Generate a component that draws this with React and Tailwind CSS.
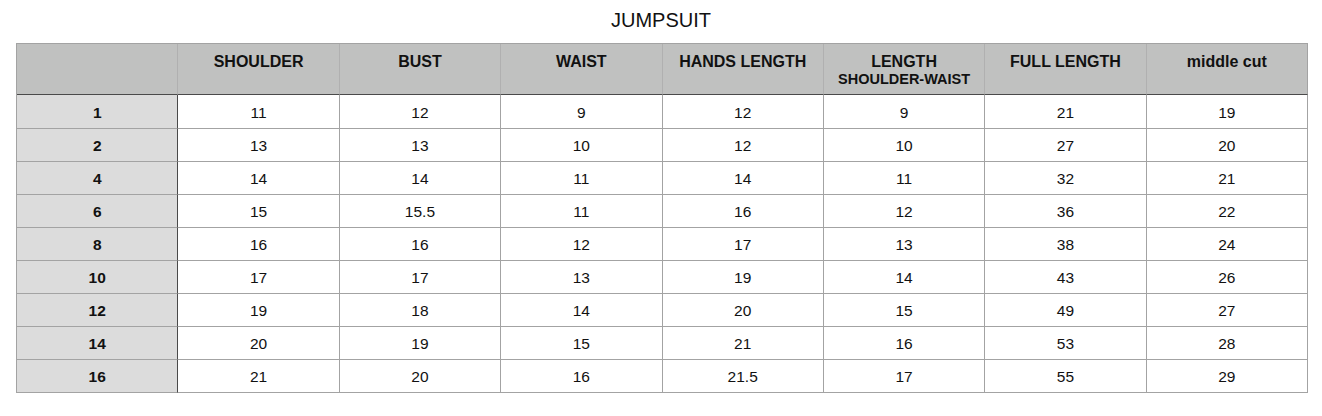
const headers = [
  ['SHOULDER'],
  ['BUST'],
  ['WAIST'],
  ['HANDS LENGTH'],
  ['LENGTH', 'SHOULDER-WAIST'],
  ['FULL LENGTH'],
  ['middle cut'],
]

const rows = [
  ['1', '11', '12', '9', '12', '9', '21', '19'],
  ['2', '13', '13', '10', '12', '10', '27', '20'],
  ['4', '14', '14', '11', '14', '11', '32', '21'],
  ['6', '15', '15.5', '11', '16', '12', '36', '22'],
  ['8', '16', '16', '12', '17', '13', '38', '24'],
  ['10', '17', '17', '13', '19', '14', '43', '26'],
  ['12', '19', '18', '14', '20', '15', '49', '27'],
  ['14', '20', '19', '15', '21', '16', '53', '28'],
  ['16', '21', '20', '16', '21.5', '17', '55', '29'],
]

export default function App() {
  return (
    <div className="w-[1322px] h-[416px] bg-white text-[#111] font-['Liberation_Sans',Arial,sans-serif]">
      <div className="h-[43px] pt-[8px] text-center text-[20px] leading-[24px]">JUMPSUIT</div>
      <table className="ml-[16px] w-[1292px] table-fixed border-separate border-spacing-0 border-t border-l border-[#a3a3a3]">
        <thead>
          <tr className="bg-[#c0c1c0]">
            <th className="h-[51px] border-r border-b border-[#a3a3a3] border-b-[#4a4a4a] border-r-[#b0b0b0]"></th>
            {headers.map((h, i) => (
              <th
                key={i}
                className="h-[51px] align-top pt-[8px] border-r border-b border-[#b0b0b0] border-b-[#4a4a4a] last:border-r-[#a3a3a3] font-bold"
              >
                <div className="text-[16px] leading-[19px]">{h[0]}</div>
                {h[1] && <div className="text-[14.5px] leading-[17px]">{h[1]}</div>}
              </th>
            ))}
          </tr>
        </thead>
        <tbody>
          {rows.map((r, i) => (
            <tr key={r[0]} className={i === 0 ? 'h-[34px]' : 'h-[33px]'}>
              {r.map((v, j) => (
                <td
                  key={j}
                  className={
                    j === 0
                      ? 'pt-[2px] text-center text-[15.5px] font-bold bg-[#dcdcdc] border-r border-b border-r-[#4a4a4a] border-b-[#a3a3a3]'
                      : 'pt-[2px] text-center text-[15.5px] border-r border-b border-[#a3a3a3]'
                  }
                >
                  {v}
                </td>
              ))}
            </tr>
          ))}
        </tbody>
      </table>
    </div>
  )
}
